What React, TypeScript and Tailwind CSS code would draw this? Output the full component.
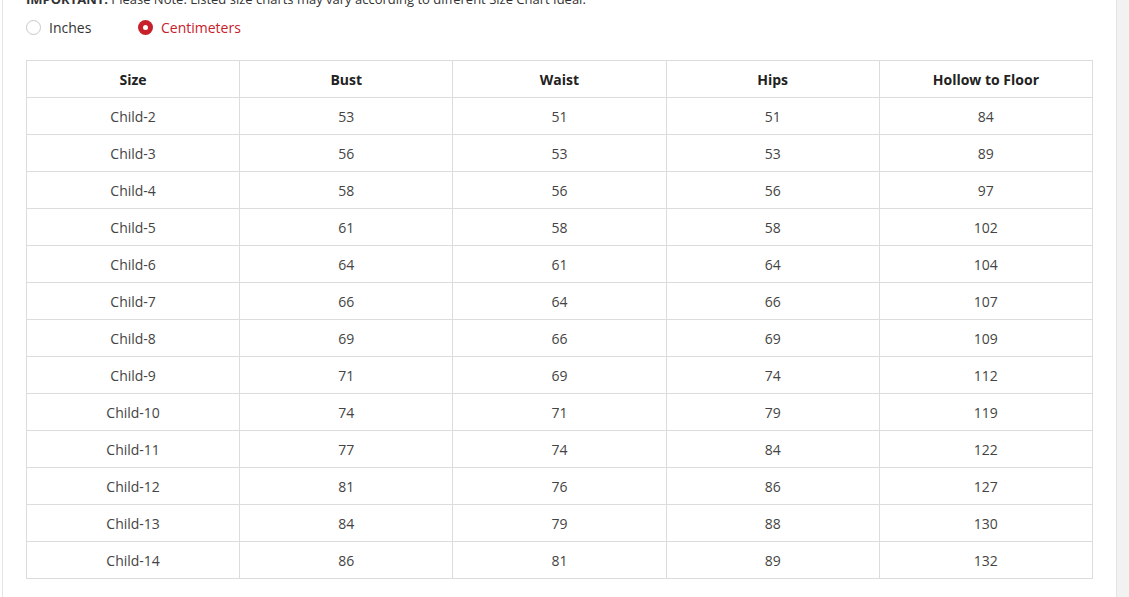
const rows: [string, number, number, number, number][] = [
  ['Child-2', 53, 51, 51, 84],
  ['Child-3', 56, 53, 53, 89],
  ['Child-4', 58, 56, 56, 97],
  ['Child-5', 61, 58, 58, 102],
  ['Child-6', 64, 61, 64, 104],
  ['Child-7', 66, 64, 66, 107],
  ['Child-8', 69, 66, 69, 109],
  ['Child-9', 71, 69, 74, 112],
  ['Child-10', 74, 71, 79, 119],
  ['Child-11', 77, 74, 84, 122],
  ['Child-12', 81, 76, 86, 127],
  ['Child-13', 84, 79, 88, 130],
  ['Child-14', 86, 81, 89, 132],
];

const headers = ['Size', 'Bust', 'Waist', 'Hips', 'Hollow to Floor'];

const App = () => {
  return (
    <div className="flex w-[1129px] h-[597px] overflow-hidden bg-white font-['Open_Sans',sans-serif] text-[#333]">
      <div className="flex-1 border-l border-[#e5e5e5] ml-[2px] border-r pl-[23px] pr-[22px]">
        <p className="mt-[-8px] h-[15px] text-[13px] leading-[15px] text-[#333] whitespace-nowrap">
          <span className="font-bold">IMPORTANT:</span> Please Note: Listed size charts may vary according to different Size Chart Ideal.
        </p>

        <div className="flex items-center h-[24px] mt-[8px] text-[14px]">
          <label className="flex items-center gap-2 w-[112px]">
            <span className="w-[15px] h-[15px] rounded-full border border-[#c8c8c8] bg-white" />
            <span className="text-[#333]">Inches</span>
          </label>
          <label className="flex items-center gap-2">
            <span className="w-[15px] h-[15px] rounded-full bg-[#c8202b] flex items-center justify-center">
              <span className="w-[5px] h-[5px] rounded-full bg-white" />
            </span>
            <span className="text-[#c8202b]">Centimeters</span>
          </label>
        </div>

        <table className="mt-[21px] w-[1067px] table-fixed border-collapse text-[14px]">
          <thead>
            <tr className="h-[37px]">
              {headers.map((h) => (
                <th key={h} className="border border-[#dcdcdc] font-bold text-[#222] text-center">
                  {h}
                </th>
              ))}
            </tr>
          </thead>
          <tbody>
            {rows.map((r) => (
              <tr key={r[0]} className="h-[37px]">
                {r.map((c, i) => (
                  <td key={i} className="border border-[#dcdcdc] text-center text-[#444]">
                    {c}
                  </td>
                ))}
              </tr>
            ))}
          </tbody>
        </table>
      </div>
      <div className="w-[12px] bg-[#f2f2f2]" />
    </div>
  );
};

export default App;
